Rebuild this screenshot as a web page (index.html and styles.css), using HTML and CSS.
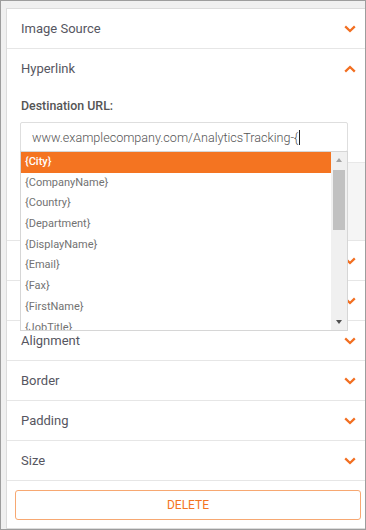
FILE: index.html
```html
<!doctype html>
<html>
<head>
    <meta charset="UTF-8">
    <title>Link Settings</title>
    <link rel="stylesheet" href="styles.css">
</head>
<body>
    <div id="panel">
        <div class="section">
            <p>Image Source</p>
            <svg class="chevron" width="12" height="8" viewBox="0 0 12 8"><polyline points="1.2,1.4 6,6 10.8,1.4"/></svg>
        </div>

        <div class="section open">
            <p>Hyperlink</p>
            <svg class="chevron" width="12" height="8" viewBox="0 0 12 8"><polyline points="1.2,6.6 6,2 10.8,6.6"/></svg>
        </div>
        <div class="section-body">
            <label>Destination URL:</label>
            <div class="field">
                <div id="destination-url"><span>www.examplecompany.com/AnalyticsTracking-{</span><span class="caret"></span></div>

                <div id="suggestions">
                    <ul>
                        <li class="active">{City}</li>
                        <li>{CompanyName}</li>
                        <li>{Country}</li>
                        <li>{Department}</li>
                        <li>{DisplayName}</li>
                        <li>{Email}</li>
                        <li>{Fax}</li>
                        <li>{FirstName}</li>
                        <li>{JobTitle}</li>
                    </ul>
                    <div class="scrollbar">
                        <span class="arrow up"></span>
                        <div class="track"><div class="thumb"></div></div>
                        <span class="arrow down"></span>
                    </div>
                </div>
            </div>
            <div class="target"></div>
        </div>

        <!-- these two rows sit under the suggestion list -->
        <div class="section">
            <p></p>
            <svg class="chevron" width="12" height="8" viewBox="0 0 12 8"><polyline points="1.2,1.4 6,6 10.8,1.4"/></svg>
        </div>
        <div class="section">
            <p></p>
            <svg class="chevron" width="12" height="8" viewBox="0 0 12 8"><polyline points="1.2,1.4 6,6 10.8,1.4"/></svg>
        </div>
        <div class="section">
            <p>Alignment</p>
            <svg class="chevron" width="12" height="8" viewBox="0 0 12 8"><polyline points="1.2,1.4 6,6 10.8,1.4"/></svg>
        </div>
        <div class="section">
            <p>Border</p>
            <svg class="chevron" width="12" height="8" viewBox="0 0 12 8"><polyline points="1.2,1.4 6,6 10.8,1.4"/></svg>
        </div>
        <div class="section">
            <p>Padding</p>
            <svg class="chevron" width="12" height="8" viewBox="0 0 12 8"><polyline points="1.2,1.4 6,6 10.8,1.4"/></svg>
        </div>
        <div class="section">
            <p>Size</p>
            <svg class="chevron" width="12" height="8" viewBox="0 0 12 8"><polyline points="1.2,1.4 6,6 10.8,1.4"/></svg>
        </div>

        <div class="actions">
            <button id="delete">DELETE</button>
        </div>
    </div>
</body>
</html>
```

FILE: styles.css
```css
html, body {
    height: 100%;
}

body {
    margin: 0;
    box-sizing: border-box;
    border: 1px solid #9d9d9d;
    background-color: #f0f0f0;
    font-family: Roboto, "Liberation Sans", sans-serif;
    color: #555;
    display: flex;
    flex-direction: column;
    padding: 7px 0 0 5px;
    overflow: hidden;
}

#panel {
    flex: 1;
    background-color: white;
    border-top: 1px solid #dcdcdc;
    border-left: 1px solid #dcdcdc;
    border-bottom: 1px solid #dcdcdc;
}

.section {
    display: flex;
    justify-content: space-between;
    align-items: center;
    height: 39px;
    padding: 0 9px 0 14px;
    border-bottom: 1px solid #e6e6e6;
}

.section.open {
    border-bottom: 0;
}

.section p {
    margin: 0;
    font-size: 13px;
    color: #565661;
}

.chevron {
    margin-top: 1px;
}

.chevron polyline {
    fill: none;
    stroke: #f26f21;
    stroke-width: 2.3;
}

.section-body {
    display: flex;
    flex-direction: column;
    height: 153px;
    padding: 10px 17px 0 13px;
    box-sizing: border-box;
    border-bottom: 1px solid #e6e6e6;
}

.section-body label {
    display: block;
    font-size: 12.4px;
    font-weight: 500;
    color: #555;
    padding-left: 1px;
    margin-bottom: 9px;
}

.field {
    position: relative;
}

#destination-url {
    display: flex;
    align-items: center;
    height: 30px;
    box-sizing: border-box;
    border: 1px solid #dedede;
    border-radius: 2px;
    padding: 0 11px;
    font-size: 12.6px;
    font-weight: 300;
    color: #555;
    white-space: nowrap;
}

.caret {
    width: 1px;
    height: 15px;
    margin-left: 1px;
    background-color: #222;
}

.target {
    flex: 1;
    margin: 10px -17px 0 0;
    background-color: #f5f5f5;
    border-top: 1px solid #e8e8e8;
    border-left: 1px solid #e4e4e4;
}

#suggestions {
    position: absolute;
    left: 0;
    right: 0;
    top: 29px;
    height: 180px;
    box-sizing: border-box;
    border: 1px solid #d6d6d6;
    background-color: white;
    display: flex;
    z-index: 1;
}

#suggestions ul {
    flex: 1;
    list-style: none;
    margin: 0;
    padding: 0;
    overflow: hidden;
}

#suggestions li {
    height: 20.7px;
    line-height: 20.7px;
    padding-left: 4px;
    font-size: 11px;
    color: #727272;
}

#suggestions li.active {
    background-color: #f47421;
    color: white;
    font-weight: 500;
}

.scrollbar {
    width: 16px;
    background-color: #f0f0f0;
    display: flex;
    flex-direction: column;
    align-items: center;
}

.scrollbar .arrow {
    width: 0;
    height: 0;
    border-left: 3.5px solid transparent;
    border-right: 3.5px solid transparent;
    margin: 6px 0;
}

.scrollbar .arrow.up {
    border-bottom: 4px solid #a3a3a3;
}

.scrollbar .arrow.down {
    border-top: 4px solid #505050;
}

.track {
    flex: 1;
    width: 100%;
    padding: 2px 2px 0 2px;
    box-sizing: border-box;
}

.thumb {
    height: 60px;
    background-color: #c1c1c1;
}

.actions {
    padding: 9px 4px 0 8px;
}

#delete {
    display: block;
    width: 100%;
    height: 30px;
    background-color: white;
    border: 1px solid #f7a872;
    border-radius: 3px;
    font-family: Roboto, "Liberation Sans", sans-serif;
    font-size: 12px;
    color: #f47421;
}
```
